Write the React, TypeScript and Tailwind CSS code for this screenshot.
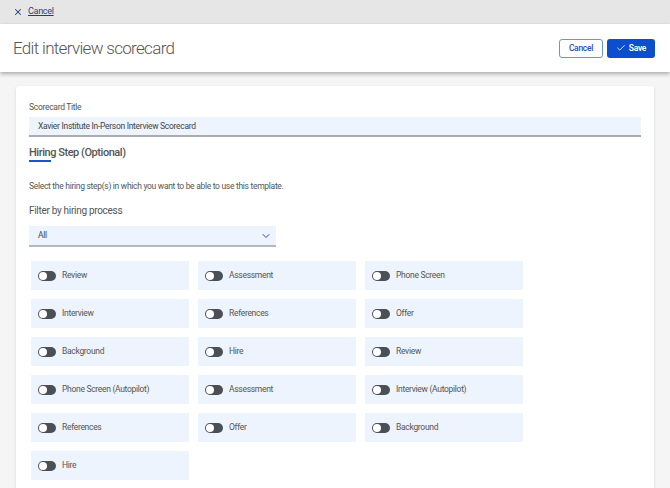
import { Check, ChevronDown, X } from "lucide-react";

const steps = [
  "Review",
  "Assessment",
  "Phone Screen",
  "Interview",
  "References",
  "Offer",
  "Background",
  "Hire",
  "Review",
  "Phone Screen (Autopilot)",
  "Assessment",
  "Interview (Autopilot)",
  "References",
  "Offer",
  "Background",
  "Hire",
];

const Toggle = () => (
  <span className="relative inline-block w-[18px] h-[10px] rounded-full bg-[#4b4f56] shrink-0">
    <span className="absolute left-[1px] top-[1px] w-[8px] h-[8px] rounded-full bg-white" />
  </span>
);

export default function App() {
  return (
    <div className="min-h-screen bg-[#f5f5f5] font-['Roboto',sans-serif] tracking-[-0.3px] text-[#555]">
      <div className="h-[24px] bg-[#e6e6e6] flex items-center pl-[13px] gap-[5px]">
        <X className="w-[10px] h-[10px] text-[#1f3f7a]" strokeWidth={2.5} />
        <a href="#" className="text-[9px] text-[#1f3f7a] underline">
          Cancel
        </a>
      </div>
      <div className="h-[48px] bg-white flex items-center justify-between pl-[13px] pr-[15px] shadow-[0_2px_4px_rgba(0,0,0,0.3)] relative z-10">
        <h1 className="text-[17px] font-light tracking-[-0.04em] text-[#555] pt-[2px]">Edit interview scorecard</h1>
        <div className="flex gap-[4px]">
          <button className="h-[19px] w-[44px] rounded-[3px] border border-[#6b93d6] text-[#1f4fb5] text-[8.5px] font-medium bg-white">
            Cancel
          </button>
          <button className="h-[19px] w-[48px] rounded-[3px] bg-[#0b4fcf] text-white text-[8.5px] font-semibold flex items-center justify-center gap-[3px]">
            <Check className="w-[10px] h-[10px]" strokeWidth={2} />
            Save
          </button>
        </div>
      </div>
      <div className="px-[16px] pt-[14px]">
        <div className="bg-white rounded-[3px] shadow-[0_1px_3px_rgba(0,0,0,0.12)] pl-[13px] pr-[13px] pt-[15px] pb-[20px]">
          <div className="text-[8.5px] text-[#555] leading-[12px]">Scorecard Title</div>
          <div className="mt-[4px] h-[20px] bg-[#eef4fd] border-b-2 border-[#a9abb0] flex items-center pl-[9px] text-[8.5px] text-[#444]">
            Xavier Institute In-Person Interview Scorecard
          </div>
          <div className="mt-[9px] text-[11px] font-medium tracking-[-0.45px] text-[#555] leading-[14px]">Hiring Step (Optional)</div>
          <div className="mt-0 w-[22px] h-[2px] bg-[#1a56c8]" />
          <p className="mt-[18px] text-[8.5px] text-[#555] leading-[12px]">
            Select the <span className="text-[#3b5a8f]">hiring</span> step(s) in which you want to be able to use this template.
          </p>
          <div className="mt-[12px] text-[10px] text-[#555] leading-[14px]">Filter by hiring process</div>
          <div className="mt-[8px] w-[247px] h-[21px] bg-[#eef4fd] border-b-2 border-[#b5b7bb] flex items-center justify-between pl-[9px] pr-[4px] text-[8.5px] text-[#444]">
            All
            <ChevronDown className="w-[12px] h-[12px] text-[#1f4fb5]" strokeWidth={2} />
          </div>
          <div className="mt-[14px] ml-[2px] grid grid-cols-[158px_158px_158px] gap-x-[9px] gap-y-[9px]">
            {steps.map((s, i) => (
              <div key={i} className="h-[29px] bg-[#eef4fd] flex items-center pl-[7px] gap-[6px] text-[8.5px] text-[#555]">
                <Toggle />
                {s}
              </div>
            ))}
          </div>
        </div>
      </div>
    </div>
  );
}
